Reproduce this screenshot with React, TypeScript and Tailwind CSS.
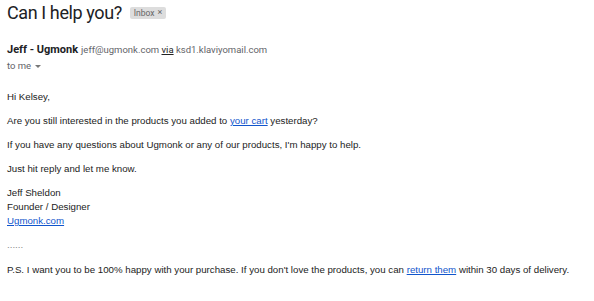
const App = () => {
  return (
    <div className="w-[594px] h-[301px] bg-white overflow-hidden px-[7px]">
      <div className="flex items-center gap-[8px]">
        <h1 className="text-[18px] leading-[26px] tracking-[-0.4px] text-[#202124] font-['Roboto',sans-serif]">Can I help you?</h1>
        <span className="flex items-center gap-[3px] rounded-[2px] bg-[#dddddd] px-[4px] h-[12px] text-[8.5px] text-[#666666] font-['Roboto',sans-serif]">
          Inbox
          <span className="text-[9px]">×</span>
        </span>
      </div>

      <div className="mt-[17px] flex items-baseline gap-[3px] leading-[14px] font-['Roboto',sans-serif]">
        <span className="text-[11px] font-bold text-[#202124]">Jeff - Ugmonk</span>
        <span className="text-[9.5px] text-[#5f6368]">
          jeff@ugmonk.com <span className="underline text-[#222222]">via</span> ksd1.klaviyomail.com
        </span>
      </div>
      <div className="mt-[2px] flex items-center gap-[4px] leading-[14px] text-[9.5px] text-[#5f6368] font-['Roboto',sans-serif]">
        to me
        <svg width="6" height="3" viewBox="0 0 6 3">
          <path d="M0 0 L6 0 L3 3 Z" fill="#777777" />
        </svg>
      </div>

      <div className="mt-[17px] text-[9.7px] leading-[14px] text-[#222222] font-['Liberation_Sans',Arial,sans-serif]">
        <p>Hi Kelsey,</p>
        <p className="mt-[10px]">
          Are you still interested in the products you added to{" "}
          <a href="#" className="underline text-[#1155cc]">your cart</a> yesterday?
        </p>
        <p className="mt-[10px]">If you have any questions about Ugmonk or any of our products, I'm happy to help.</p>
        <p className="mt-[10px]">Just hit reply and let me know.</p>
        <div className="mt-[10px]">
          <p>Jeff Sheldon</p>
          <p>Founder / Designer</p>
          <a href="#" className="underline text-[#1155cc]">Ugmonk.com</a>
        </div>
        <p className="mt-[10px] text-[#888888]">......</p>
        <p className="mt-[11px]">
          P.S. I want you to be 100% happy with your purchase. If you don't love the products, you can{" "}
          <a href="#" className="underline text-[#1155cc]">return them</a> within 30 days of delivery.
        </p>
      </div>
    </div>
  )
}

export default App
